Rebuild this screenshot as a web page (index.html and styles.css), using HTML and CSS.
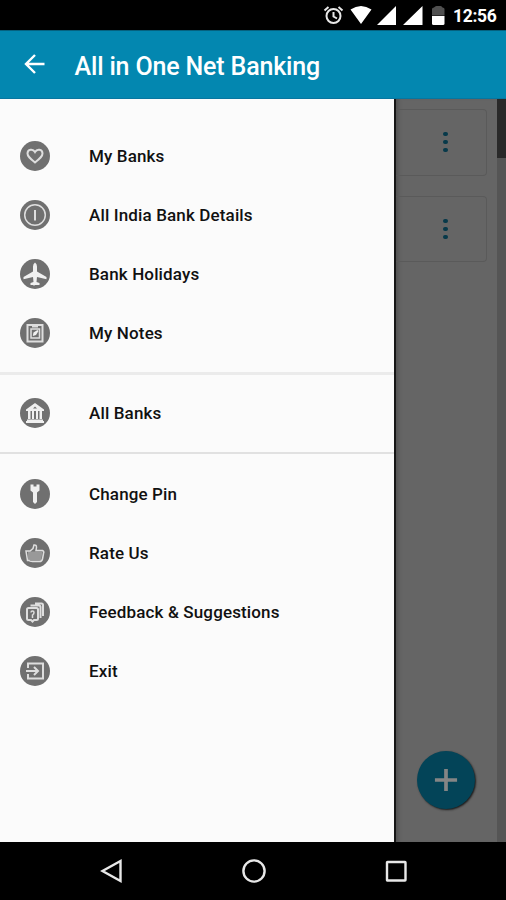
FILE: index.html
```
<!DOCTYPE html>
<html lang="en">
<head>
<meta charset="utf-8">
<title>All in One Net Banking</title>
<link rel="stylesheet" href="styles.css">
</head>
<body>
<div class="phone">
  <div class="status">
    <svg class="status-icons" viewBox="0 0 140 30">
      <g fill="none" stroke="#e8e8e8" stroke-width="2"><circle cx="23.5" cy="16" r="7"/><path d="M23.500 12v4.500l3.500 2M14.500 10.500l4-3.500M32.500 10.500l-4-3.500"/></g>
      <path fill="#fff" d="M40.500 9.500Q51 2.500 61.500 9.500L51 24zM86 6v19H67zM112.500 6v19H93z"/>
      <path fill="#505050" d="M122 15.500V9q0-1.500 2-1.500 1-1.500 2.500-1.500h4q1.500 0 2 1.500 2 0 2 1.500v6.500z"/>
      <path fill="#fff" d="M122 16h12.500v7.500q0 1.500-1.500 1.500h-9.500q-1.500 0-1.500-1.500z"/>
    </svg>
    <span class="clock">12:56</span>
  </div>
  <header class="appbar">
    <svg class="back" viewBox="0 0 22 20"><path d="M20.500 10H2M11 1L2 10l9 9"/></svg>
    <h1>All in One Net Banking</h1>
  </header>
  <main class="content">
    <nav class="drawer">
      <ul>
        <li><svg viewBox="0 0 30 30"><circle class="disc" cx="15" cy="15" r="15"/><path class="line" d="M15 21.500C10 17.500 7.500 15.500 7.500 12.500c0-4.500 5.500-5 7.500-1.500 2-3.500 7.500-3 7.500 1.500 0 3-2.500 5-7.500 9z"/></svg><span>My Banks</span></li>
        <li><svg viewBox="0 0 30 30"><circle class="disc" cx="15" cy="15" r="15"/><circle class="line thin" cx="15" cy="15" r="10.300"/><path class="line" d="M15 10v10.500"/></svg><span>All India Bank Details</span></li>
        <li><svg viewBox="0 0 30 30"><circle class="disc" cx="15" cy="15" r="15"/><path class="solid" d="M15 3.500q2 1.500 2 4v5l9.500 5.500v2.200l-9.500-2.200-.5 5 3 1v2h-4.500l-.5 .5h-1l-.5-.5H10.500v-2l3-1-.5-5-9.500 2.200V18l9.500-5.500v-5q0-2.500 2-4z"/></svg><span>Bank Holidays</span></li>
        <li><svg viewBox="0 0 30 30"><circle class="disc" cx="15" cy="15" r="15"/><path class="line" d="M7.500 7h15v16.500h-15z"/><path class="line thin" d="M11 11h8.500v9H11zM12 8.800h6"/><path class="solid" d="M12.800 18l.7-3.500 4-2.500 1 1-2.500 4z"/></svg><span>My Notes</span></li>
      </ul>
      <hr class="thick">
      <ul>
        <li><svg viewBox="0 0 30 30"><circle class="disc" cx="15" cy="15" r="15"/><path class="solid" fill-rule="evenodd" d="M15 5l9 6.500V13H6v-1.500zM15 8.500l-2 2h4zM8 13h2.500v9H8zM12 13h2v9h-2zM16 13h2v9h-2zM19.500 13H22v9h-2.500zM7 21.500h16V23h1v2H6v-2h1z"/></svg><span>All Banks</span></li>
      </ul>
      <hr>
      <ul>
        <li><svg viewBox="0 0 30 30"><circle class="disc" cx="15" cy="15" r="15"/><path class="solid" d="M10.500 5.500h3v2h3v-2h3v6l-2.500 2V23l-2 2-2-2v-9.500l-2.500-2z"/></svg><span>Change Pin</span></li>
        <li><svg viewBox="0 0 30 30"><circle class="disc" cx="15" cy="15" r="15"/><path class="pale" d="M8 13.500h14.500l-1.500 9H8z"/><path class="line thin" d="M6 13h4l3-2.500 1-3.500q2.500-.5 2.500 2.500l-.5 3h6.500q2 1 1 3l-1 5.500q-.5 2.500-3 2.500h-7q-3 0-3.500-1H7.500z"/></svg><span>Rate Us</span></li>
        <li><svg viewBox="0 0 30 30"><circle class="disc" cx="15" cy="15" r="15"/><path class="line" d="M7 12.500q0-1.500 1.500-1.500h8q1.500 0 1.500 1.500v9q0 1.500-1.500 1.500H14l-1.500 1.500L11 23H8.500Q7 23 7 21.500zM10.500 8.500H19q1.500 0 1.500 1.500v11M15 6.500h6.500q1.500 0 1.500 1.500v11"/><path class="line thin" d="M11 15.500q0-1.500 1.500-1.500t1.500 1.500-1.500 2.500v3"/></svg><span>Feedback &amp; Suggestions</span></li>
        <li><svg viewBox="0 0 30 30"><circle class="disc" cx="15" cy="15" r="15"/><path class="line" d="M8 12V7.500h15v15H8V18M6 15h12M14 11l4 4-4 4"/></svg><span>Exit</span></li>
      </ul>
    </nav>
    <section class="page">
      <div class="list">
        <div class="card"><i></i><i></i><i></i></div>
        <div class="card"><i></i><i></i><i></i></div>
        <div class="fab"><svg viewBox="0 0 26 26"><path d="M13 1v24M1 13h24"/></svg></div>
      </div>
      <div class="track"><div class="thumb"></div></div>
    </section>
  </main>
  <footer class="navbar">
    <svg viewBox="0 0 24 26"><path d="M20.500 3v20L2.500 13z"/></svg>
    <svg viewBox="0 0 24 26"><circle cx="12" cy="13" r="10.600"/></svg>
    <svg viewBox="0 0 24 26"><rect x="3" y="4" width="18.500" height="18.500" rx=".5"/></svg>
  </footer>
</div>
</body>
</html>
```
FILE: styles.css
```
* { box-sizing: border-box; }
body { margin: 0; font-family: Roboto, "Liberation Sans", sans-serif; }
.phone { width: 506px; height: 900px; display: flex; flex-direction: column; background: #000; overflow: hidden; }
.status { height: 30px; display: flex; align-items: center; padding-left: 310px; color: #fff; }
.status-icons { width: 140px; height: 30px; flex: none; }
.clock { font-size: 17.5px; font-weight: 700; margin-left: 3px; padding-top: 2px; letter-spacing: -.3px; }
.appbar { height: 68.5px; flex: none; display: flex; align-items: center; padding-left: 24px; background: #0387b0; color: #fff; border-top: 1px solid #05617f; border-bottom: 1px solid #0876a0; }
.back { width: 22px; height: 20px; margin-top: 0; fill: none; stroke: #fff; stroke-width: 2.4; }
h1 { margin: 5px 0 0 28.500px; font-size: 25px; line-height: 30px; font-weight: 500; letter-spacing: -.16px; white-space: nowrap; }
.content { height: 743.5px; flex: none; display: flex; }
.drawer { width: 394px; flex: none; background: #fbfbfb; padding-top: 27.500px; }
ul { list-style: none; margin: 0; padding: 0; }
li { height: 59.200px; display: flex; align-items: center; padding-left: 20px; font-size: 17px; font-weight: 500; letter-spacing: .14px; color: #111; }
li svg { width: 30px; height: 30px; margin-right: 39px; flex: none; }
li span { padding-top: 0; white-space: nowrap; }
hr { border: 0; height: 2px; margin: 9.500px 0; background: #e1e1e1; }
hr.thick { height: 3px; margin: 9px 0; background: #ebebeb; }
.disc { fill: #707070; }
.line { fill: none; stroke: #dedede; stroke-width: 2; }
.line.thin { stroke-width: 1.5; }
.solid { fill: #f0f0f0; }
.pale { fill: #999; }
.page { flex: 1; display: flex; background: #656565; border-left: 2px solid #161616; }
.list { flex: 1; display: flex; flex-direction: column; padding-top: 10.500px; box-shadow: inset 5px 0 4px -3px #505050; }
.card { width: 91px; height: 66.500px; margin-bottom: 20px; border: 1.500px solid #5a5a5a; border-left: 0; border-radius: 0 4px 4px 0; display: flex; flex-direction: column; align-items: center; justify-content: center; gap: 3.700px; padding-left: 9px; }
.card i { width: 4.200px; height: 4.200px; border-radius: 50%; background: #07394a; }
.fab { width: 58px; height: 58px; margin: auto 0 33px 20.500px; border-radius: 50%; background: #034458; box-shadow: 1px 1px 2px #191919; display: flex; align-items: center; justify-content: center; }
.fab svg { width: 24px; height: 24px; fill: none; stroke: #858585; stroke-width: 4; }
.track { width: 9px; background: #555; }
.thumb { height: 59px; background: #292929; }
.navbar { flex: 1; display: flex; justify-content: center; gap: 118px; align-items: center; padding-left: 2px; }
.navbar svg { width: 24px; height: 26px; fill: none; stroke: #e8e8e8; stroke-width: 2.4; }
```
